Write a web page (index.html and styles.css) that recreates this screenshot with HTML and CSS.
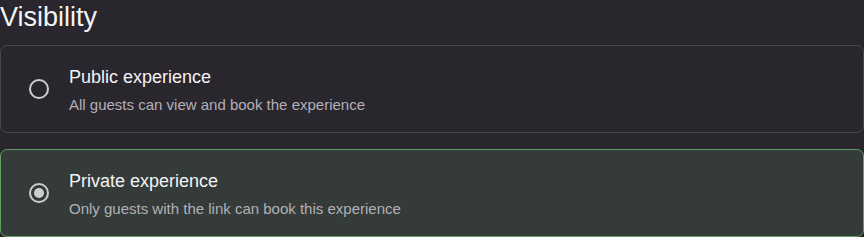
FILE: index.html
```html
<!DOCTYPE html>
<html lang="en">
<head>
  <meta charset="UTF-8" />
  <meta name="viewport" content="width=device-width, initial-scale=1.0"/>
  <title>Visibility</title>
  <link rel="stylesheet" href="styles.css">
</head>
<body>

  <!-- Visibility picker -->
  <section class="visibility">
    <h2 class="visibility-title">Visibility</h2>

    <div class="options">
      <label class="option">
        <input type="radio" name="visibility" value="public">
        <span class="radio"></span>
        <span class="option-text">
          <span class="option-name">Public experience</span>
          <span class="option-desc">All guests can view and book the experience</span>
        </span>
      </label>

      <label class="option">
        <input type="radio" name="visibility" value="private" checked>
        <span class="radio"></span>
        <span class="option-text">
          <span class="option-name">Private experience</span>
          <span class="option-desc">Only guests with the link can book this experience</span>
        </span>
      </label>
    </div>
  </section>

</body>
</html>
```

FILE: styles.css
```css
:root {
  --bg: #29262e;
  --text-main: #f4f3f5;
  --text-secondary: #b3b0b7;
  --border: #47444d;
  --selected-bg: #343b39;
  --selected-border: #5f9f60;
  --radio: #cfcdd1;
}

* {
  margin: 0;
  padding: 0;
  box-sizing: border-box;
}

body {
  background: var(--bg);
  color: var(--text-main);
  font-family: "Liberation Sans", Arial, sans-serif;
}

.visibility-title {
  font-size: 27px;
  font-weight: 400;
  line-height: 32px;
  padding-top: 1px;
  margin-bottom: 12px;
}

.options {
  display: flex;
  flex-direction: column;
  gap: 16px;
}

.option {
  display: flex;
  align-items: center;
  gap: 20px;
  height: 88px;
  padding: 0 28px;
  border: 1px solid var(--border);
  border-radius: 7px;
  cursor: pointer;
}

.option input {
  display: none;
}

.radio {
  width: 20px;
  height: 20px;
  border: 2px solid var(--radio);
  border-radius: 50%;
  display: flex;
  align-items: center;
  justify-content: center;
  flex-shrink: 0;
}

.option input:checked ~ .radio::after {
  content: '';
  width: 10px;
  height: 10px;
  border-radius: 50%;
  background: var(--radio);
}

.option:has(input:checked) {
  background: var(--selected-bg);
  border-color: var(--selected-border);
}

.option-text {
  display: flex;
  flex-direction: column;
  gap: 6px;
  padding-top: 1px;
}

.option-name {
  font-size: 18px;
  line-height: 24px;
}

.option-desc {
  font-size: 15px;
  line-height: 20px;
  color: var(--text-secondary);
}
```
